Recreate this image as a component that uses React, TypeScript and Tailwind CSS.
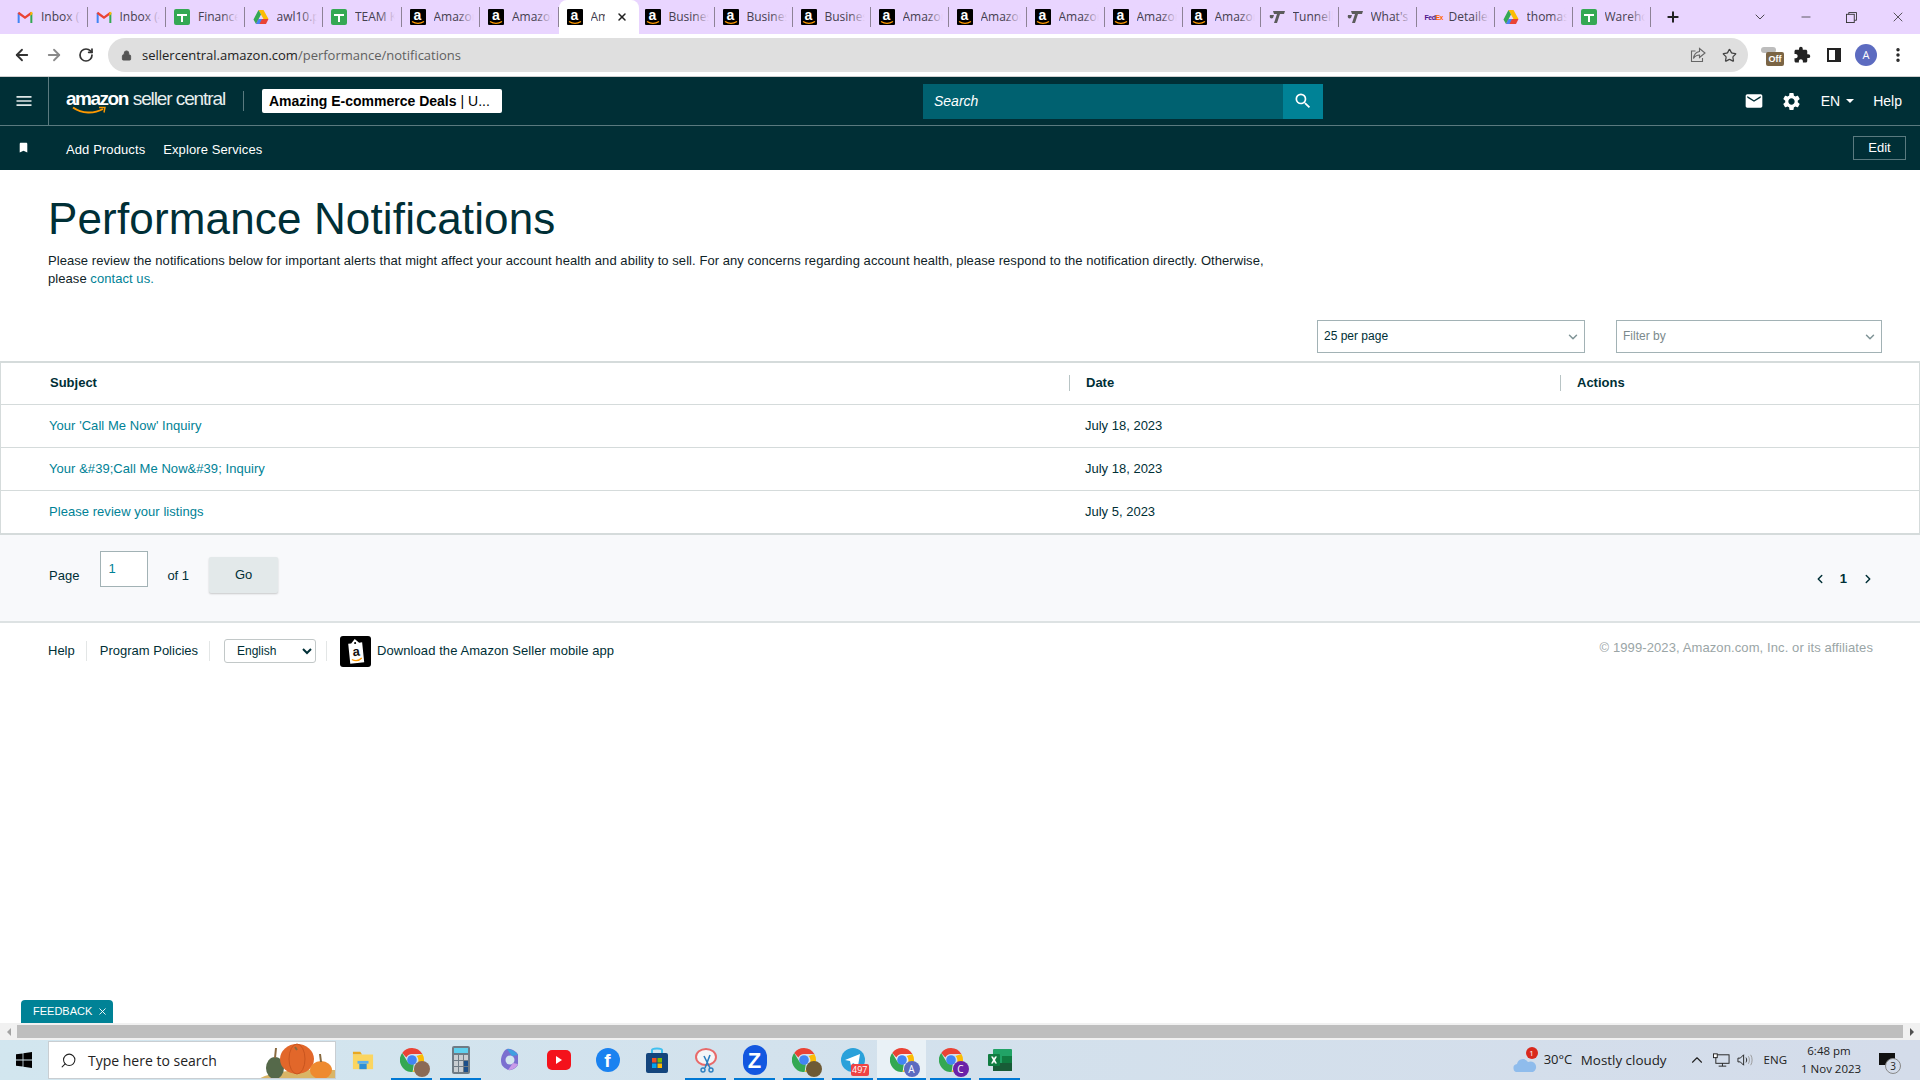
import React from "react";
import { ArrowLeft, ArrowRight, RotateCw, Lock, Star, Plus, X, ChevronDown, ChevronUp, Minus, Search as SearchIcon, ChevronLeft, ChevronRight, MoreVertical } from "lucide-react";
import { MdEmail, MdSettings, MdMenu, MdBookmark, MdSearch, MdExtension } from "react-icons/md";

const sans = "font-['Liberation_Sans',Arial,sans-serif]";
const ui = "font-['Open_Sans','Noto_Sans',sans-serif]";

function Gmail() {
  return (
    <svg viewBox="0 0 24 18" className="w-[16px] h-[12px]">
      <path d="M1 18V3l3-1v16z" fill="#4285f4" />
      <path d="M23 18V3l-3-1v16z" fill="#34a853" />
      <path d="M1 4 3 1l9 7 9-7 2 3-11 8z" fill="#ea4335" />
      <path d="M20 2 23 1v4l-3 2z" fill="#fbbc04" />
    </svg>
  );
}
function Sheets() {
  return (
    <svg viewBox="0 0 16 16" className="w-[16px] h-[16px]">
      <rect width="16" height="16" rx="2" fill="#34a853" />
      <path d="M3 5h10v2H9v6H7V7H3z" fill="#fff" />
    </svg>
  );
}
function Drive() {
  return (
    <svg viewBox="0 0 16 14" className="w-[16px] h-[14px]">
      <path d="M5.5 0h5l5 9h-5z" fill="#fbbc04" />
      <path d="M5.5 0 8 4.5 3 14 .5 9.5z" fill="#34a853" />
      <path d="M3 14l2.5-5h10L13 14z" fill="#ea4335" />
      <path d="M3 14l2.5-5H9l-2.5 5z" fill="#4285f4" />
    </svg>
  );
}
function AmazonFav() {
  return (
    <div className="relative w-[16px] h-[16px] bg-black rounded-[1px] overflow-hidden flex justify-center">
      <span className={`${sans} text-white text-[14px] font-bold leading-[13px]`}>a</span>
      <svg viewBox="0 0 16 16" className="absolute inset-0 w-[16px] h-[16px]">
        <path d="M2 12.5c4 2.5 8 2.5 12 0" stroke="#f90" strokeWidth="1.4" fill="none" />
      </svg>
    </div>
  );
}
function Tunnel() {
  return (
    <svg viewBox="0 0 16 14" className="w-[16px] h-[14px]">
      <path d="M4 1h12l-1 3h-4L8 13H5l3-9H5zM1 5h4L4 8C2 9 0 8 1 5z" fill="#5b5b5b" />
    </svg>
  );
}
function Fedex() {
  return (
    <div className={`${sans} text-[7px] font-bold tracking-[-0.5px] w-[16px] leading-none text-center`}>
      <span className="text-[#4d148c]">Fed</span>
      <span className="text-[#ff6600]">Ex</span>
    </div>
  );
}

const tabs: [React.ReactNode, string][] = [
  [<Gmail />, "Inbox (7"],
  [<Gmail />, "Inbox (4"],
  [<Sheets />, "Finance"],
  [<Drive />, "awl10.p"],
  [<Sheets />, "TEAM K"],
  [<AmazonFav />, "Amazon"],
  [<AmazonFav />, "Amazon"],
];
const tabs2: [React.ReactNode, string][] = [
  [<AmazonFav />, "Business"],
  [<AmazonFav />, "Business"],
  [<AmazonFav />, "Business"],
  [<AmazonFav />, "Amazon"],
  [<AmazonFav />, "Amazon"],
  [<AmazonFav />, "Amazon"],
  [<AmazonFav />, "Amazon"],
  [<AmazonFav />, "Amazon"],
  [<Tunnel />, "Tunnell"],
  [<Tunnel />, "What's"],
  [<Fedex />, "Detailed"],
  [<Drive />, "thomas"],
  [<Sheets />, "Warehou"],
];

function Tab({ icon, label, wide }: { icon: React.ReactNode; label: string; wide?: boolean }) {
  return (
    <div className={`relative ${wide ? "w-[78.5px]" : "w-[78px]"} h-[34px] shrink-0 flex items-center pl-[8px] pr-[2px] gap-[8px]`}>
      <div className="w-[16px] flex justify-center shrink-0">{icon}</div>
      <div className={`${ui} relative text-[12px] text-[#45404f] whitespace-nowrap overflow-hidden w-[40px]`}>
        {label}
        <div className="absolute right-0 top-0 bottom-0 w-[16px] bg-gradient-to-r from-transparent to-[#e9d5ff]" />
      </div>
      <div className="absolute right-0 top-[7px] h-[20px] w-px bg-[#8d8296]" />
    </div>
  );
}

function Chrome({ badge }: { badge?: React.ReactNode }) {
  return (
    <div className="relative w-[24px] h-[24px]">
      <svg viewBox="0 0 24 24" className="w-[24px] h-[24px]">
        <path d="M12 0a12 12 0 0 1 10.4 6H12a6 6 0 0 0-5.6 3.6L2.2 5A12 12 0 0 1 12 0z" fill="#ea4335" />
        <path d="M22.4 6A12 12 0 0 1 12.6 24l4.6-8A6 6 0 0 0 16.6 8z" fill="#fbbc04" />
        <path d="M12.6 24A12 12 0 0 1 2.2 5l4.8 8a6 6 0 0 0 6.8 3z" fill="#34a853" />
        <circle cx="12" cy="12" r="4.8" fill="#4285f4" />
      </svg>
      {badge}
    </div>
  );
}
function Badge({ bg, text }: { bg: string; text: string }) {
  return (
    <div className={`absolute right-[-6px] bottom-[-5px] w-[16px] h-[16px] rounded-full ${bg} text-white text-[10px] flex items-center justify-center ${ui}`}>
      {text}
    </div>
  );
}

function TaskItem({ children, line, active }: { children: React.ReactNode; line?: boolean; active?: boolean }) {
  return (
    <div className={`relative w-[49px] h-[40px] flex items-center justify-center ${active ? "bg-[#e9f1f6]" : ""}`}>
      {children}
      {line && <div className={`absolute ${active ? "left-0 right-0" : "left-[4px] right-[4px]"} bottom-0 h-[2px] bg-[#0078d4]`} />}
    </div>
  );
}

function Select({ label, gray, className }: { label: string; gray?: boolean; className: string }) {
  return (
    <div className={`${className} h-[33px] border border-[#a2b2b5] bg-white flex items-center justify-between pl-[6px] pr-[4px] pb-[2px]`}>
      <span className={`text-[12px] ${gray ? "text-[#7b8a8c]" : "text-[#002f36]"}`}>{label}</span>
      <ChevronDown className="w-[14px] h-[14px] text-[#7f9396] mt-[3px]" strokeWidth={2.5} />
    </div>
  );
}

function Row({ subject, date }: { subject: string; date: string }) {
  return (
    <div className="flex h-[43px] items-center border-b border-[#d5dbdb]">
      <div className="w-[1084px] pl-[48px] text-[13px] tracking-[0.05px] text-[#008296]">{subject}</div>
      <div className="text-[13px] text-[#002f36]">{date}</div>
    </div>
  );
}

export default function App() {
  return (
    <div className={`${sans} w-[1920px] h-[1080px] flex flex-col overflow-hidden bg-white relative`}>
      {/* tab strip */}
      <div className="h-[34px] bg-[#e9d5ff] flex items-center pl-[9px] shrink-0">
        {tabs.map((t, i) => (
          <Tab key={i} icon={t[0]} label={t[1]} wide />
        ))}
        <div className="w-[80px] h-[34px] bg-white rounded-t-[8px] mr-[-2px] flex items-center pl-[8px] gap-[8px] shrink-0 relative z-10">
          <AmazonFav />
          <div className={`${ui} text-[12px] text-[#45404f] w-[14px] overflow-hidden whitespace-nowrap`}>Amazon</div>
          <X className="w-[12px] h-[12px] text-[#222] absolute right-[11px] top-[11px]" strokeWidth={3} />
        </div>
        {tabs2.map((t, i) => (
          <Tab key={i} icon={t[0]} label={t[1]} />
        ))}
        <Plus className="w-[16px] h-[16px] ml-[14px] text-[#222]" strokeWidth={3} />
        <div className="flex-1" />
        <ChevronDown className="w-[16px] h-[16px] text-[#333] mr-[31px]" strokeWidth={1.3} />
        <Minus className="w-[14px] h-[14px] text-[#333] mr-[33px]" strokeWidth={1.3} />
        <svg viewBox="0 0 12 12" className="w-[11px] h-[11px] mr-[33px]" fill="none" stroke="#333">
          <rect x="0.5" y="2.5" width="8.5" height="9" />
          <path d="M3 2.5V.5h8.5V9H9" />
        </svg>
        <X className="w-[16px] h-[16px] text-[#333] mr-[14px]" strokeWidth={1.2} />
      </div>

      {/* address bar */}
      <div className="h-[43px] bg-white flex items-center shrink-0 border-b border-[#cfcfcf]">
        <ArrowLeft className="w-[18px] h-[18px] ml-[13px] text-[#333]" strokeWidth={2.4} />
        <ArrowRight className="w-[18px] h-[18px] ml-[14px] text-[#8a8a8a]" strokeWidth={2.4} />
        <RotateCw className="w-[16px] h-[16px] ml-[15px] text-[#333]" strokeWidth={2.6} />
        <div className="w-[1640px] h-[34px] ml-[14px] bg-[#dfdfdf] rounded-full flex items-center pl-[13px]">
          <Lock className="w-[11px] h-[11px] text-[#555]" fill="#555" strokeWidth={2} />
          <span className={`${ui} text-[13px] ml-[10px] mt-[1px] text-[#222]`}>
            sellercentral.amazon.com<span className="text-[#5f5f5f]">/performance/notifications</span>
          </span>
          <div className="flex-1" />
          <svg viewBox="0 0 16 16" className="w-[16px] h-[16px] mr-[16px]" fill="none" stroke="#666" strokeWidth="1.1">
            <path d="M5.5 4H1.5v10.5h11V11" />
            <path d="M9.5 1.5 15 6l-5.500 4.500V8C7 8 5 9 3.500 11.500 4 7.500 6 5 9.500 4.500z" />
          </svg>
          <Star className="w-[15px] h-[15px] text-[#444] mr-[11px]" strokeWidth={2} />
        </div>
        <div className="relative w-[24px] h-[24px] ml-[13px]">
          <div className="absolute left-0 top-[4px] w-[15px] h-[6px] bg-[#bdbdbd] rounded-[3px]" />
          <div className={`absolute left-[5px] top-[9px] w-[18px] h-[14px] rounded-[2px] bg-[#7b6545] text-white text-[9px] font-bold text-center leading-[14px]`}>Off</div>
        </div>
        <MdExtension className="w-[18px] h-[18px] ml-[8px] text-[#222]" />
        <div className="w-[14px] h-[14px] ml-[16px] border-[2.5px] border-[#222] border-r-[6px]" />
        <div className={`${ui} w-[22px] h-[22px] ml-[14px] rounded-full bg-[#5c6bc0] text-white text-[11px] flex items-center justify-center`}>A</div>
        <MoreVertical className="w-[18px] h-[18px] ml-[12px] text-[#222]" strokeWidth={2.6} />
      </div>

      {/* header */}
      <div className="h-[49px] bg-[#002f36] border-b border-[#5a7a7f] flex items-center shrink-0 text-white">
        <div className="w-[49px] h-full border-r border-[#5a7a7f] flex items-center justify-center">
          <MdMenu className="w-[20px] h-[20px] text-[#dfe8e8]" />
        </div>
        <div className="relative ml-[17px] w-[159px] h-[30px] flex items-start leading-[24px] whitespace-nowrap mt-[1px]">
          <span className="text-[19px] font-bold tracking-[-1.5px]">amazon</span>
          <span className="text-[19px] ml-[5px] tracking-[-1.1px] text-[#e8eeee]">seller central</span>
          <svg viewBox="0 0 44 10" className="absolute left-0 top-[19px] w-[44px] h-[10px]" fill="none">
            <path d="M7 1.5C16 8 28 8 37 3" stroke="#f90" strokeWidth="2" />
            <path d="M33 1.5h6l-1 5" stroke="#f90" strokeWidth="1.4" />
          </svg>
        </div>
        <div className="w-px h-[20px] bg-[#5a7a7f] ml-[18px]" />
        <div className="ml-[18px] w-[240px] h-[24px] bg-white rounded-[2px] flex items-center pl-[7px] text-[14px] text-black whitespace-nowrap">
          <span className="font-bold">Amazing E-commerce Deals</span>
          <span className="ml-[4px]">| U...</span>
        </div>
        <div className="ml-[421px] w-[360px] h-[35px] bg-[#006170] flex items-center pl-[11px] text-[14px] italic">Search</div>
        <div className="w-[40px] h-[35px] bg-[#008296] flex items-center justify-center">
          <MdSearch className="w-[20px] h-[20px]" />
        </div>
        <div className="flex-1" />
        <MdEmail className="w-[20px] h-[20px] mr-[17px]" />
        <MdSettings className="w-[21px] h-[21px] mr-[19px]" />
        <span className="text-[14px]">EN</span>
        <div className="ml-[6px] w-0 h-0 border-x-[4px] border-x-transparent border-t-[4px] border-t-white mr-[19px]" />
        <span className="text-[14px] mr-[18px]">Help</span>
      </div>

      {/* nav 2 */}
      <div className="h-[44px] bg-[#002f36] flex items-center shrink-0 text-white text-[13px]">
        <MdBookmark className="w-[13px] h-[13px] ml-[17px] mb-[2px]" />
        <span className="ml-[36px] mt-[3px] tracking-[0.1px]">Add Products</span>
        <span className="ml-[18px] mt-[3px] tracking-[0.1px]">Explore Services</span>
        <div className="flex-1" />
        <div className="w-[53px] h-[24px] mr-[14px] border border-[#5a7a7f] flex items-center justify-center">Edit</div>
      </div>

      {/* main */}
      <div className="flex-1 flex flex-col min-h-0">
        <h1 className="text-[44px] leading-[50px] tracking-[0.15px] text-[#002f36] mt-[24px] ml-[48px]">Performance Notifications</h1>
        <p className="text-[13px] leading-[18px] tracking-[0.06px] text-[#0f2327] mt-[8px] ml-[48px] w-[1245px]">
          Please review the notifications below for important alerts that might affect your account health and ability to sell. For any concerns regarding account health, please respond to the notification directly. Otherwise, please <span className="text-[#008296]">contact us.</span>
        </p>
        <div className="flex justify-end mt-[32px] pr-[38px] gap-[31px]">
          <Select label="25 per page" className="w-[268px]" />
          <Select label="Filter by" gray className="w-[266px]" />
        </div>

        <div className="mt-[8px] border border-[#d5dbdb] border-t-2 border-b-2">
          <div className="relative flex h-[42px] items-center border-b border-[#d5dbdb] pb-[2px] text-[13px] font-bold text-[#002f36]">
            <div className="w-[1068px] pl-[49px] h-full flex items-center">Subject</div>
            <div className="w-[491px] border-l border-[#b8c4c5] h-[16px] pl-[16px] flex items-center">Date</div>
            <div className="border-l border-[#b8c4c5] h-[16px] pl-[16px] flex items-center">Actions</div>
          </div>
          <Row subject="Your 'Call Me Now' Inquiry" date="July 18, 2023" />
          <Row subject={"Your &#39;Call Me Now&#39; Inquiry"} date="July 18, 2023" />
          <div className="flex h-[42px] items-center">
            <div className="w-[1084px] pl-[48px] text-[13px] tracking-[0.05px] text-[#008296]">Please review your listings</div>
            <div className="text-[13px] text-[#002f36]">July 5, 2023</div>
          </div>
        </div>

        <div className="h-[88px] bg-[#f8f9fb] border-b-2 border-[#dde2e3] flex items-start text-[13px] text-[#002f36] shrink-0">
          <span className="ml-[49px] mt-[31px]">Page</span>
          <div className="ml-[21px] mt-[16px] w-[48px] h-[36px] bg-white border border-[#a2b2b5] pl-[7px] pt-[7px] text-[#008296] text-[13px]">1</div>
          <span className="ml-[19px] mt-[31px]">of 1</span>
          <div className="ml-[20px] mt-[22px] w-[69px] h-[36px] bg-[#e3e9ea] rounded-[2px] shadow-[0_1px_2px_rgba(0,0,0,0.2)] flex items-center justify-center">Go</div>
          <div className="flex-1" />
          <div className="mt-[34px] mr-[45px] flex items-center">
            <ChevronLeft className="w-[14px] h-[14px] mr-[13px]" strokeWidth={2.5} />
            <span className="font-bold">1</span>
            <ChevronRight className="w-[14px] h-[14px] ml-[14px]" strokeWidth={2.5} />
          </div>
        </div>

        <div className="relative h-[46px] flex items-center text-[13px] text-[#002f36] mt-[5px]">
          <span className="ml-[48px]">Help</span>
          <div className="w-px h-[20px] bg-[#e3e6e6] ml-[11px]" />
          <span className="ml-[13px]">Program Policies</span>
          <div className="w-px h-[20px] bg-[#e3e6e6] ml-[11px]" />
          <select className="ml-[14px] w-[92px] h-[24px] border border-[#c2c8c8] rounded-[3px] bg-white pl-[8px] text-[12px]">
            <option>English</option>
          </select>
          <div className="w-px h-[20px] bg-[#e3e6e6] ml-[10px]" />
          <div className="ml-[13px] w-[31px] h-[31px] bg-black rounded-[3px] flex items-center justify-center overflow-hidden">
            <svg viewBox="0 0 18 26" className="w-[18px] h-[26px] rotate-[-6deg]">
              <path d="M9 1l4 4h3v20H2V5h3z" fill="#fff" />
              <circle cx="9" cy="5" r="1" fill="#000" />
              <text x="9" y="18" textAnchor="middle" fontSize="13" fontWeight="700" fill="#111" fontFamily="Liberation Sans">a</text>
              <path d="M4 21c3 2 7 2 10-.5" stroke="#f90" strokeWidth="1.3" fill="none" />
            </svg>
          </div>
          <span className="ml-[6px] tracking-[0.08px]">Download the Amazon Seller mobile app</span>
          <div className="flex-1" />
          <span className="text-[#9aa5a6] mr-[47px] mb-[6px] tracking-[0.1px]">© 1999-2023, Amazon.com, Inc. or its affiliates</span>
        </div>
        <div className="flex-1" />
        <div className="ml-[21px] w-[92px] h-[23px] bg-[#008296] rounded-t-[4px] text-white text-[11px] flex items-center pl-[12px] shrink-0">
          FEEDBACK
          <X className="w-[11px] h-[11px] ml-[5px]" strokeWidth={2} />
        </div>
      </div>

      {/* scrollbar */}
      <div className="h-[17px] bg-[#f1f1f1] flex items-center shrink-0">
        <div className="w-[17px] flex justify-center">
          <div className="w-0 h-0 border-y-[4px] border-y-transparent border-r-[4px] border-r-[#a3a3a3]" />
        </div>
        <div className="flex-1 h-[13px] bg-[#bebebe] mt-[-1px]" />
        <div className="w-[17px] flex justify-center">
          <div className="w-0 h-0 border-y-[4px] border-y-transparent border-l-[4px] border-l-[#505050]" />
        </div>
      </div>

      {/* taskbar */}
      <div className="h-[40px] bg-gradient-to-r from-[#d2e6ef] to-[#d4dcea] flex items-center shrink-0">
        <div className="w-[48px] flex justify-center">
          <svg viewBox="0 0 16 16" className="w-[16px] h-[16px]" fill="#000">
            <path d="M0 2.3 6.6 1.4v6.2H0zM7.4 1.3 16 0v7.6H7.4zM0 8.4h6.6v6.2L0 13.7zM7.4 8.4H16V16l-8.6-1.2z" />
          </svg>
        </div>
        <div className={`${ui} relative w-[288px] h-[38px] bg-white border border-[#c9ced2] flex items-center pl-[11px] text-[14px] text-[#222] overflow-hidden mr-[2px]`}>
          <SearchIcon className="w-[17px] h-[17px] scale-x-[-1] text-[#222]" strokeWidth={1.5} />
          <span className="ml-[11px]">Type here to search</span>
          <svg viewBox="0 0 80 38" className="absolute right-0 top-0 w-[80px] h-[38px]">
            <path d="M2 38C14 30 40 26 80 28v10z" fill="#d9b566" />
            <ellipse cx="20" cy="26" rx="9" ry="11" fill="#55694a" />
            <ellipse cx="42" cy="17" rx="17" ry="15" fill="#e2672a" />
            <ellipse cx="42" cy="17" rx="8" ry="15" fill="none" stroke="#c9551f" strokeWidth="1" />
            <ellipse cx="66" cy="28" rx="11" ry="9" fill="#ee8a2f" />
            <path d="M20 16 21 6M66 20l-1-8M42 8l-2-3" stroke="#8a6a3f" strokeWidth="2" />
          </svg>
        </div>
        <TaskItem>
          <svg viewBox="0 0 24 24" className="w-[22px] h-[22px]">
            <path d="M1 3h8l2 3H1z" fill="#e9a820" />
            <rect x="1" y="6" width="22" height="16" fill="#fbd560" />
            <path d="M8 22v-6h8v6z" fill="#2d8fd5" />
            <rect x="6" y="13" width="12" height="3" fill="#5ab0ee" />
          </svg>
        </TaskItem>
        <TaskItem line><Chrome badge={<Badge bg="bg-[#8b6a55]" text="" />} /></TaskItem>
        <TaskItem line>
          <div className="w-[18px] h-[28px] bg-[#6f7b85] rounded-[2px] p-[2px] flex flex-col gap-[2px]">
            <div className="h-[5px] bg-[#5fd0ee]" />
            <div className="flex-1 grid grid-cols-3 gap-[1px]">
              <div className="bg-[#c9ced2]" /><div className="bg-[#c9ced2]" /><div className="bg-[#c9ced2]" />
              <div className="bg-[#c9ced2]" /><div className="bg-[#c9ced2]" /><div className="bg-[#1c4f8a]" />
              <div className="bg-[#c9ced2]" /><div className="bg-[#c9ced2]" /><div className="bg-[#1c4f8a]" />
            </div>
          </div>
        </TaskItem>
        <TaskItem>
          <svg viewBox="0 0 24 24" className="w-[24px] h-[26px]">
            <path d="M9 1c5-1 11 4 11 6v9c0 3-6 7-10 6-6-3-7-6-7-10S6 2 9 1z" fill="#7b6fd0" />
            <circle cx="12" cy="12" r="4.5" fill="#d3e5ef" />
            <path d="M9 1c4 0 8 2 11 6l-6 1z" fill="#3fa0e0" />
            <path d="M20 16c-2 4-6 6-10 6l5-7z" fill="#c99be8" />
          </svg>
        </TaskItem>
        <TaskItem>
          <div className="w-[24px] h-[20px] bg-[#f4121b] rounded-[5px] flex items-center justify-center">
            <div className="w-0 h-0 border-y-[4px] border-y-transparent border-l-[6px] border-l-white" />
          </div>
        </TaskItem>
        <TaskItem>
          <div className={`${sans} w-[24px] h-[24px] rounded-full bg-[#1a82f0] text-white font-bold text-[19px] flex items-end justify-center leading-[22px]`}>f</div>
        </TaskItem>
        <TaskItem>
          <svg viewBox="0 0 22 26" className="w-[22px] h-[26px]">
            <path d="M6 7V3c0-2 10-2 10 0v4" stroke="#3fc0f0" strokeWidth="2" fill="none" />
            <rect x="0" y="6" width="22" height="20" rx="2" fill="#14457d" />
            <rect x="6" y="11" width="4.5" height="4.5" fill="#f25022" />
            <rect x="11.5" y="11" width="4.5" height="4.5" fill="#7fba00" />
            <rect x="6" y="16.5" width="4.5" height="4.5" fill="#00a4ef" />
            <rect x="11.5" y="16.5" width="4.5" height="4.5" fill="#ffb900" />
          </svg>
        </TaskItem>
        <TaskItem line>
          <svg viewBox="0 0 26 26" className="w-[26px] h-[26px]" fill="none">
            <ellipse cx="13" cy="10" rx="10" ry="8" stroke="#e86a6a" strokeWidth="2" fill="#f4f6f8" />
            <path d="M11 9l6 12M17 8l-5 13" stroke="#2c7fc0" strokeWidth="1.6" />
            <circle cx="10" cy="23" r="2" stroke="#2c7fc0" strokeWidth="1.4" />
            <circle cx="18" cy="23" r="2" stroke="#2c7fc0" strokeWidth="1.4" />
          </svg>
        </TaskItem>
        <TaskItem line>
          <div className={`${sans} w-[24px] h-[30px] rounded-full bg-[#1257e0] text-white font-bold text-[22px] flex items-center justify-center`}>Z</div>
        </TaskItem>
        <TaskItem line><Chrome badge={<Badge bg="bg-[#6e5a35]" text="" />} /></TaskItem>
        <TaskItem line>
          <div className="relative w-[24px] h-[24px] rounded-full bg-[#2aa1da]">
            <svg viewBox="0 0 24 24" className="w-[24px] h-[24px]"><path d="M4 12 19 6l-2 12-5-3-2 3-1-5z" fill="#fff" /></svg>
            <div className={`${ui} absolute right-[-4px] bottom-[-4px] px-[1px] bg-[#ef4444] rounded-[2px] text-white text-[9px] leading-[12px]`}>497</div>
          </div>
        </TaskItem>
        <TaskItem line active><Chrome badge={<Badge bg="bg-[#5c6bc0]" text="A" />} /></TaskItem>
        <TaskItem line><Chrome badge={<Badge bg="bg-[#6b21a8]" text="C" />} /></TaskItem>
        <TaskItem line>
          <svg viewBox="0 0 24 24" className="w-[24px] h-[24px]">
            <rect x="5" y="1" width="19" height="22" rx="1" fill="#21a366" />
            <rect x="14" y="8" width="10" height="7" fill="#107c41" />
            <rect x="5" y="15" width="19" height="8" fill="#185c37" />
            <rect x="0" y="6" width="12" height="12" rx="1" fill="#107c41" />
            <path d="M3 8.5h2l1 2 1-2h2l-2 3.500 2 3.500H7l-1-2-1 2H3l2-3.500z" fill="#fff" />
          </svg>
        </TaskItem>
        <div className="flex-1" />
        <div className="relative w-[24px] h-[20px] mr-[7px] mt-[3px]">
          <svg viewBox="0 0 24 16" className="w-[24px] h-[16px] mt-[4px]">
            <path d="M5 16a4 4 0 0 1-1-8 6 6 0 0 1 11-2 5 5 0 0 1 5 10z" fill="#8fbcec" />
          </svg>
          <div className={`${ui} absolute right-[-1px] top-[-5px] w-[12px] h-[12px] rounded-full bg-[#d9291c] text-white text-[8px] leading-[12px] text-center`}>1</div>
        </div>
        <span className={`${ui} text-[13px] text-[#222]`}>30°C</span>
        <span className={`${ui} text-[13.4px] text-[#222] ml-[8.5px]`}>Mostly cloudy</span>
        <ChevronUp className="w-[18px] h-[18px] ml-[21px] text-[#222]" strokeWidth={1.5} />
        <svg viewBox="0 0 18 14" className="w-[17px] h-[14px] ml-[7px]" fill="none" stroke="#222">
          <rect x="3" y="1.5" width="14" height="9" />
          <path d="M10 10.500v3M6 13.500h8" />
          <rect x="0.5" y="0.5" width="4" height="4" fill="#fff" />
        </svg>
        <svg viewBox="0 0 18 14" className="w-[17px] h-[14px] ml-[7px]" fill="none" stroke="#222">
          <path d="M1 5h2.500L7 1.500v11L3.500 9H1z" />
          <path d="M9.500 4.500c1 1.500 1 3.500 0 5" />
          <path d="M12 3c1.500 2 1.500 6 0 8M14.500 1.500c2 3 2 8 0 11" stroke="#999" />
        </svg>
        <span className={`${ui} text-[11.5px] text-[#222] ml-[10px]`}>ENG</span>
        <div className={`${ui} ml-[14px] w-[56px] text-center text-[11.5px] leading-[18px] text-[#222]`}>
          <div>6:48 pm</div>
          <div className="whitespace-nowrap">1 Nov 2023</div>
        </div>
        <div className="relative w-[16px] h-[14px] ml-[22px] mr-[25px]">
          <div className="w-[16px] h-[12px] bg-[#111]" />
          <div className={`${ui} absolute left-[6px] top-[5px] w-[16px] h-[16px] rounded-full bg-[#d4dcea] border border-[#888] text-[#222] text-[10px] leading-[14px] text-center`}>3</div>
        </div>
      </div>
    </div>
  );
}
